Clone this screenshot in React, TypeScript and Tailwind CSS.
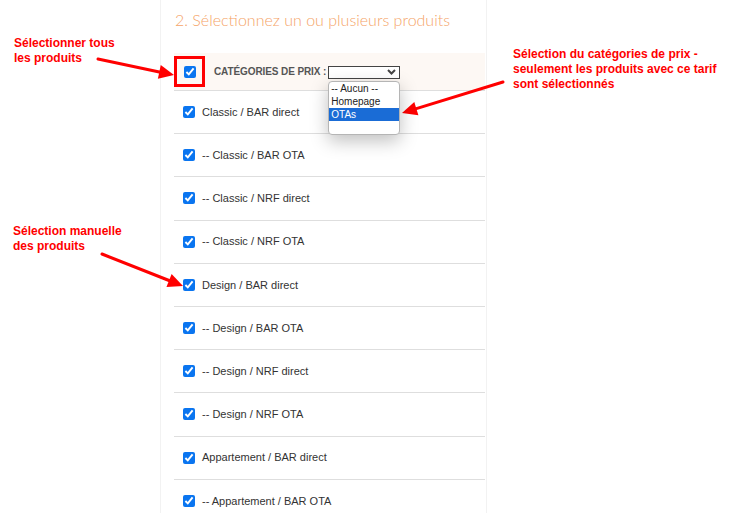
import React from "react";

const PRODUCTS = [
  "Classic / BAR direct",
  "-- Classic / BAR OTA",
  "-- Classic / NRF direct",
  "-- Classic / NRF OTA",
  "Design / BAR direct",
  "-- Design / BAR OTA",
  "-- Design / NRF direct",
  "-- Design / NRF OTA",
  "Appartement / BAR direct",
  "-- Appartement / BAR OTA",
];

function Check() {
  return (
    <input
      type="checkbox"
      defaultChecked
      className="m-0 h-[12px] w-[12px] shrink-0 accent-[#0a75f0]"
    />
  );
}

// straight red arrow with a filled head, tip at (x2, y2)
function Arrow({ x1, y1, x2, y2 }: { x1: number; y1: number; x2: number; y2: number }) {
  const a = Math.atan2(y2 - y1, x2 - x1);
  const len = 15;
  const half = 7;
  const bx = x2 - len * Math.cos(a);
  const by = y2 - len * Math.sin(a);
  const px = -Math.sin(a) * half;
  const py = Math.cos(a) * half;
  return (
    <g>
      <line x1={x1} y1={y1} x2={bx} y2={by} stroke="#ff0000" strokeWidth={3} strokeLinecap="round" />
      <polygon
        points={`${x2},${y2} ${bx + px},${by + py} ${bx - px},${by - py}`}
        fill="#ff0000"
      />
    </g>
  );
}

export default function App() {
  return (
    <div className="relative h-[513px] w-[731px] overflow-hidden bg-white font-['Liberation_Sans',Arial,sans-serif]">
      {/* Panel */}
      <div className="ml-[160px] h-full w-[327px] border-x border-[#f2f2f2] pl-[13px] pr-px">
        <h2 className="flex h-[53px] items-start pt-[8px] pl-px font-['Lato',sans-serif] text-[16px] font-light text-[#f5a468]">
          2. Sélectionnez un ou plusieurs produits
        </h2>

        {/* Header row */}
        <div className="relative flex h-[38px] items-center border-b border-[#dedede] bg-[#fdf8f4]">
          <div className="flex h-[31px] w-[31px] items-center justify-center border-[3px] border-[#ff0000]">
            <Check />
          </div>
          <span className="ml-[9px] text-[10px] font-bold tracking-[-0.1px] text-[#555]">CATÉGORIES DE PRIX :</span>
          <div className="relative ml-[2px] mt-[1px]">
            <div className="flex h-[13px] w-[72px] items-center justify-end border border-[#444] bg-white pr-[3px]">
              <svg width="9" height="6" viewBox="0 0 9 6">
                <path d="M1 1 L4.5 4.5 L8 1" fill="none" stroke="#444" strokeWidth="2" />
              </svg>
            </div>
            {/* open list */}
            <div className="absolute left-0 top-[15px] z-10 w-[72px] overflow-hidden rounded-[4px] border border-[#b5b5b5] bg-white pb-[13px] text-[10px] leading-[13px] shadow-[0_6px_18px_rgba(0,0,0,0.25)]">
              <div className="px-[2px] text-[#222]">-- Aucun --</div>
              <div className="px-[2px] text-[#222]">Homepage</div>
              <div className="bg-[#1a6cd6] px-[2px] text-white">OTAs</div>
            </div>
          </div>
        </div>

        {PRODUCTS.map((p) => (
          <div key={p} className="flex h-[43.2px] items-center gap-[7px] border-b border-[#dedede] pl-[9px]">
            <Check />
            <span className="text-[11px] text-[#333]">{p}</span>
          </div>
        ))}
      </div>

      {/* Annotations */}
      <div className="absolute left-[14px] top-[36px] text-[12px] font-bold leading-[15px] text-[#ff0000]">
        Sélectionner tous
        <br />
        les produits
      </div>
      <div className="absolute left-[513px] top-[47px] text-[12px] font-bold leading-[15px] text-[#ff0000]">
        Sélection du catégories de prix -
        <br />
        seulement les produits avec ce tarif
        <br />
        sont sélectionnés
      </div>
      <div className="absolute left-[13px] top-[224px] text-[12px] font-bold leading-[15px] text-[#ff0000]">
        Sélection manuelle
        <br />
        des produits
      </div>
      <svg className="pointer-events-none absolute left-0 top-0" width="731" height="513">
        <Arrow x1={98} y1={59} x2={174} y2={75} />
        <Arrow x1={503} y1={82} x2={402} y2={113} />
        <Arrow x1={102} y1={254} x2={183} y2={286} />
      </svg>
    </div>
  );
}
